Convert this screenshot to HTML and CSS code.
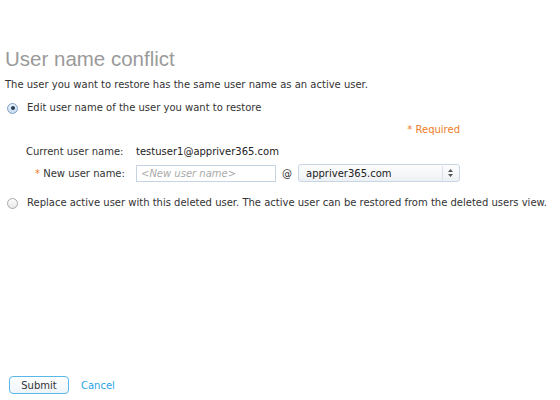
FILE: index.html
```html
<!DOCTYPE html>
<html>
<head>
<meta charset="utf-8">
<link rel="stylesheet" href="styles.css">
</head>
<body>
<div class="page">
  <h1 class="title">User name conflict</h1>
  <p class="desc">The user you want to restore has the same user name as an active user.</p>
  <label class="option">
    <span class="radio checked"><span class="dot"></span></span>
    <span>Edit user name of the user you want to restore</span>
  </label>
  <div class="edit">
    <div class="required"><span class="star">*</span> Required</div>
    <div class="row">
      <span class="label">Current user name:</span>
      <span class="value">testuser1@appriver365.com</span>
    </div>
    <div class="row">
      <span class="label"><span class="star">*</span> New user name:</span>
      <span class="input">&lt;New user name&gt;</span>
      <span class="at">@</span>
      <span class="select">
        <span>appriver365.com</span>
        <svg class="arrows" width="7" height="10" viewBox="0 0 7 10"><path d="M3.5 1 L6 4 H1 Z M3.5 9 L6 6 H1 Z" fill="#555"/></svg>
      </span>
    </div>
  </div>
  <label class="option second">
    <span class="radio"></span>
    <span>Replace active user with this deleted user. The active user can be restored from the deleted users view.</span>
  </label>
  <div class="spacer"></div>
  <div class="actions">
    <button class="submit">Submit</button>
    <a class="cancel">Cancel</a>
  </div>
</div>
</body>
</html>
```
FILE: styles.css
```css
html, body { margin: 0; padding: 0; background: #fff; }
body { width: 560px; height: 400px; overflow: hidden; font-family: "DejaVu Sans", Verdana, sans-serif; font-size: 10px; color: #333; }
.page { display: flex; flex-direction: column; height: 400px; padding: 0 0 0 5px; box-sizing: border-box; }
.title { margin: 46px 0 0; font-family: "Liberation Sans", Arial, sans-serif; font-weight: normal; font-size: 20.5px; line-height: 26px; color: #9a9a9a; }
.desc { margin: 6px 0 0; line-height: 14px; }
.option { display: flex; align-items: center; gap: 9px; margin-top: 9px; padding-left: 2px; line-height: 14px; white-space: nowrap; }
.radio { width: 11px; height: 11px; border-radius: 50%; border: 1px solid #a9a9a9; background: linear-gradient(#fdfdfd, #e6e6e6); box-sizing: border-box; display: flex; align-items: center; justify-content: center; flex: none; }
.radio.checked { border-color: #7d9ec4; background: linear-gradient(#eaf3fc, #c8dcf1); }
.dot { width: 4px; height: 4px; border-radius: 50%; background: #2b3e57; }
.edit { padding-left: 21px; display: flex; flex-direction: column; width: 434px; }
.required { align-self: flex-end; color: #f07c2a; margin-top: 8px; line-height: 14px; }
.star { color: #f07c2a; }
.row { display: flex; align-items: center; height: 22px; }
.required + .row { margin-top: 3px; }
.label { width: 110px; flex: none; }
.row .label .star { margin-left: 9px; }
.value { color: #222; }
.input { width: 141px; height: 17px; border: 1px solid #c5d3e3; box-sizing: border-box; color: #aaa; font-style: italic; padding-left: 4px; line-height: 15px; }
.at { margin: 0 6px; }
.select { width: 163px; height: 18px; border: 1px solid #c8d5e5; border-radius: 3px; box-sizing: border-box; display: flex; align-items: center; justify-content: space-between; padding: 0 5px 0 7px; background: linear-gradient(#fdfdfd, #eef1f4); color: #222; font-size: 10px; }
.arrows { border-left: 1px solid #dde; padding-left: 4px; height: 14px; }
.second { margin-top: 12px; }
.spacer { flex: 1; }
.actions { display: flex; align-items: center; gap: 12px; padding: 0 0 6px 4px; }
.submit { width: 60px; height: 18px; border: 1px solid #58b8e8; border-radius: 4px; background: linear-gradient(#ffffff, #eef5fa); font-family: "DejaVu Sans", Verdana, sans-serif; font-size: 10px; color: #333; padding: 0; }
.cancel { color: #2aa4e6; }
```
